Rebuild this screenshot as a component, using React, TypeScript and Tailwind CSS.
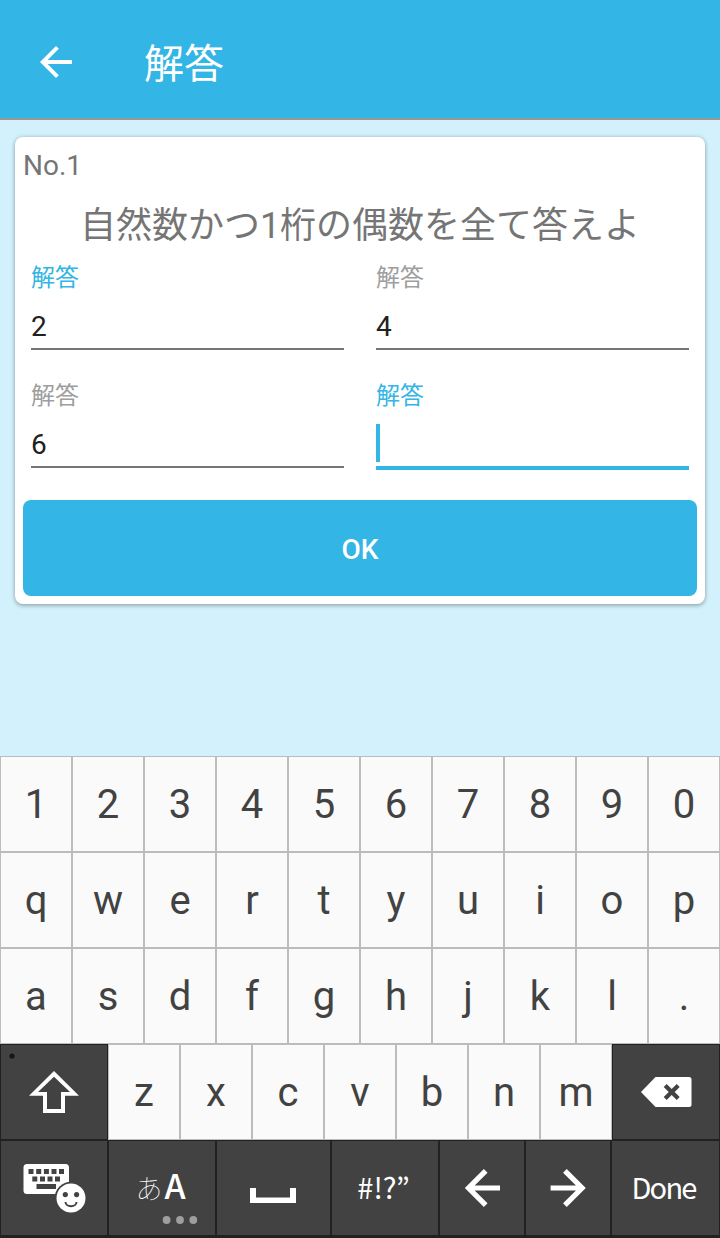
import React from "react";

const KEY_ROWS = ["1234567890", "qwertyuiop", "asdfghjkl."];
const BOTTOM_LETTERS = "zxcvbnm";

function LetterKey({ label }: { label: string }) {
  return (
    <button className="flex h-24 w-[72px] shrink-0 items-center justify-center border border-[#bcbcbc] bg-[#fafafa] pt-0.5 text-[40px] leading-[48px] text-[#424242]">
      {label}
    </button>
  );
}

function DarkKey({ className, children }: { className: string; children: React.ReactNode }) {
  return (
    <button
      className={`flex h-24 shrink-0 items-center justify-center border border-[#212121] bg-[#424242] font-['Noto_Sans_CJK_JP',sans-serif] text-white ${className}`}
    >
      {children}
    </button>
  );
}

function Field({ value, tinted, focused }: { value?: string; tinted?: boolean; focused?: boolean }) {
  return (
    <div className="flex flex-col">
      <div className={`h-[54px] pt-2 text-2xl leading-9 ${tinted ? "text-[#33b5e5]" : "text-[#9e9e9e]"}`}>解答</div>
      <div
        className={`box-content flex h-[42px] ${
          focused ? "border-b-4 border-[#33b5e5]" : "border-b-2 border-[#757575]"
        }`}
      >
        {focused ? (
          <span className="h-[38px] w-1 bg-[#33b5e5]" />
        ) : (
          <span className="pt-px text-[28px] leading-10 text-[#212121]">{value}</span>
        )}
      </div>
    </div>
  );
}

function KeyboardIcon() {
  return (
    <svg className="block shrink-0" width="106" height="94" viewBox="1 1141 106 94">
      <rect x="23.5" y="1164" width="45.5" height="30" rx="3.5" fill="#fff" />
      <g fill="#424242">
        <rect x="28.5" y="1169" width="5" height="5" />
        <rect x="36.2" y="1169" width="5" height="5" />
        <rect x="43.9" y="1169" width="5" height="5" />
        <rect x="51.5" y="1169" width="5" height="5" />
        <rect x="59" y="1169" width="5" height="5" />
        <rect x="32.3" y="1176.5" width="5" height="5" />
        <rect x="40" y="1176.5" width="5" height="5" />
        <rect x="47.5" y="1176.5" width="5" height="5" />
        <rect x="55" y="1176.5" width="5" height="5" />
        <rect x="36.5" y="1184" width="19.5" height="5" />
        <circle cx="71" cy="1198" r="16.3" />
      </g>
      <circle cx="71" cy="1198" r="14.5" fill="#fff" />
      <circle cx="65.3" cy="1194.6" r="2.6" fill="#424242" />
      <circle cx="76.6" cy="1194.6" r="2.6" fill="#424242" />
      <path d="M65.5 1202a5.5 4.2 0 0 0 11 0" fill="none" stroke="#424242" strokeWidth="2" />
    </svg>
  );
}

export default function App() {
  return (
    <div className="flex h-[1238px] w-[720px] flex-col overflow-hidden bg-[#d3f1fc] font-['Roboto','Noto_Sans_CJK_JP',sans-serif]">
      <header className="flex h-[120px] shrink-0 items-center border-b-2 border-[#979797] bg-[#33b5e5] pt-1.5 pl-8 text-white">
        <svg width="48" height="48" viewBox="0 0 24 24" fill="currentColor">
          <path d="M20 11H7.83l5.59-5.59L12 4l-8 8 8 8 1.41-1.41L7.83 13H20v-2z" />
        </svg>
        <h1 className="ml-16 pt-1.5 text-[40px] leading-[48px] font-normal">解答</h1>
      </header>

      <main className="flex-1 px-[15px] pt-[17px]">
        <section className="h-[467px] rounded-lg bg-white px-2 shadow-[0_2px_4px_rgba(0,0,0,0.22),0_0_4px_rgba(0,0,0,0.18)]">
          <div className="h-14 pt-[9px] text-[28px] leading-10 text-[#757575]">No.1</div>
          <div className="h-[59px] pt-[9px] text-center text-4xl leading-[48px] text-[#757575]">
            自然数かつ1桁の偶数を全て答えよ
          </div>
          <div className="grid h-[248px] auto-rows-[118px] grid-cols-[313px_313px] gap-x-8 px-2">
            <Field value="2" tinted />
            <Field value="4" />
            <Field value="6" />
            <Field tinted focused />
          </div>
          <button className="flex h-24 w-full items-center justify-center rounded-lg bg-[#33b5e5] pt-1 text-[28px] leading-10 font-medium text-white">
            OK
          </button>
        </section>
      </main>

      <div className="h-[482px] shrink-0 bg-[#212121]">
        {KEY_ROWS.map((row) => (
          <div key={row} className="flex">
            {row.split("").map((label) => (
              <LetterKey key={label} label={label} />
            ))}
          </div>
        ))}

        <div className="flex">
          <DarkKey className="w-[108px]">
            <svg className="block shrink-0" width="106" height="94" viewBox="1 1045 106 94">
              <circle cx="12" cy="1056" r="2.6" fill="#151515" />
              <path
                fillRule="evenodd"
                fill="#fff"
                d="M54 1071 79 1095.7H65V1113H43V1095.7H29zM54 1076.7 38 1092h9v17h14v-17h9z"
              />
            </svg>
          </DarkKey>
          {BOTTOM_LETTERS.split("").map((label) => (
            <LetterKey key={label} label={label} />
          ))}
          <DarkKey className="w-[108px]">
            <svg className="block shrink-0" width="106" height="94" viewBox="613 1045 106 94">
              <path d="M641 1092 655.5 1077H689a2.5 2.5 0 0 1 2.5 2.5v25a2.5 2.5 0 0 1-2.5 2.5H655.5z" fill="#fff" />
              <path d="M665.2 1085.5l13 13M678.2 1085.5l-13 13" stroke="#424242" strokeWidth="4.2" />
            </svg>
          </DarkKey>
        </div>

        <div className="flex">
          <DarkKey className="w-[108px]">
            <KeyboardIcon />
          </DarkKey>
          <DarkKey className="relative w-[108px]">
            <span className="flex items-baseline pr-[3px] pb-[3px] leading-10">
              <span className="text-[27px] font-thin">あ</span>
              <span className="ml-0.5 text-[34px] font-medium">A</span>
            </span>
            <svg className="absolute right-[17px] bottom-[11px]" width="36" height="8" viewBox="0 0 36 8" fill="#9e9e9e">
              <circle cx="4.6" cy="4" r="3.9" />
              <circle cx="18" cy="4" r="3.9" />
              <circle cx="31.3" cy="4" r="3.9" />
            </svg>
          </DarkKey>
          <DarkKey className="w-[115px]">
            <svg className="block shrink-0" width="113" height="94" viewBox="217 1141 113 94">
              <path d="M250 1188h6v9h34v-9h6v15h-46z" fill="#fff" />
              <path d="M256 1197h34v1h-34z" fill="#9e9e9e" />
            </svg>
          </DarkKey>
          <DarkKey className="w-[108px]">
            <span className="pr-[3px] pb-1 text-[29px] leading-10">#!?”</span>
          </DarkKey>
          <DarkKey className="w-[86px]">
            <svg className="block shrink-0" width="84" height="94" viewBox="440 1141 84 94">
              <path
                d="M485.7 1170.8 468.5 1188l17.2 17.2M470 1188h30"
                fill="none"
                stroke="#fff"
                strokeWidth="5.2"
              />
            </svg>
          </DarkKey>
          <DarkKey className="w-[86px]">
            <svg className="block shrink-0" width="84" height="94" viewBox="526 1141 84 94">
              <path
                d="M564.9 1170.8 582.1 1188l-17.2 17.2M580.6 1188h-30"
                fill="none"
                stroke="#fff"
                strokeWidth="5.2"
              />
            </svg>
          </DarkKey>
          <DarkKey className="w-[109px]">
            <span className="pr-1 pb-1 text-[29px] leading-10 tracking-[-1.8px]">Done</span>
          </DarkKey>
        </div>
      </div>
    </div>
  );
}
